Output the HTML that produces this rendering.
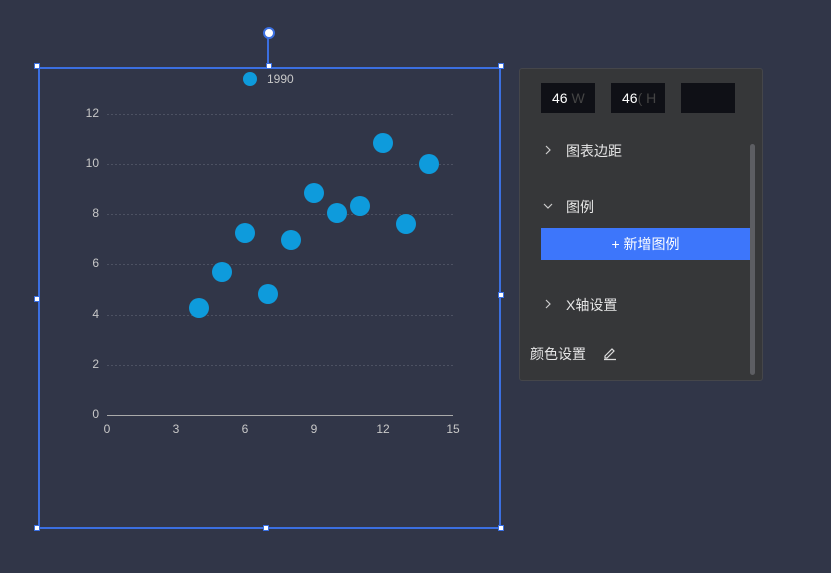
<!DOCTYPE html>
<html><head><meta charset="utf-8"><style>
body{margin:0;width:831px;height:573px;background:#313648;overflow:hidden;font-family:"Liberation Sans","Noto Sans CJK SC",sans-serif;position:relative}
.p{position:absolute}
.h{position:absolute;width:4px;height:4px;background:#fff;border:1px solid #3b6fe0}
.panel{position:absolute;left:519px;top:68px;width:242px;height:311px;background:#363739;border:1px solid #45464a;border-radius:3px}
.inp{position:absolute;top:14px;width:54px;height:30px;background:#0f1016;color:#fff;font-size:14px;line-height:30px}
.lbl{position:absolute;color:#e6e6e6;font-size:14px}
.chev{position:absolute}
</style></head><body>
<div class="p" style="left:38px;top:67px;width:463px;height:462px;border:2px solid #3b6fe0;box-sizing:border-box"></div>
<div class="p" style="left:267px;top:37px;width:2px;height:30px;background:#3b6fe0"></div>
<div class="p" style="left:263px;top:27px;width:8px;height:8px;border-radius:50%;background:#fff;border:2px solid #3b6fe0"></div>
<div class="h" style="left:34px;top:63px"></div><div class="h" style="left:266px;top:63px"></div><div class="h" style="left:498px;top:63px"></div>
<div class="h" style="left:34px;top:296px"></div><div class="h" style="left:498px;top:292px"></div>
<div class="h" style="left:34px;top:525px"></div><div class="h" style="left:263px;top:525px"></div><div class="h" style="left:498px;top:525px"></div>
<svg class="p" style="left:0;top:0" width="520" height="573">
<g stroke="#4c5162" stroke-dasharray="2,2" stroke-width="1">
<line x1="107" x2="453" y1="114.5" y2="114.5"/><line x1="107" x2="453" y1="164.5" y2="164.5"/><line x1="107" x2="453" y1="214.5" y2="214.5"/><line x1="107" x2="453" y1="264.5" y2="264.5"/><line x1="107" x2="453" y1="315.5" y2="315.5"/><line x1="107" x2="453" y1="365.5" y2="365.5"/></g>
<line x1="107" x2="453" y1="415.5" y2="415.5" stroke="#aaa"/>
<g fill="#c8c8c8" font-size="12" font-family="Liberation Sans" text-anchor="end">
<text x="99" y="117">12</text><text x="99" y="167">10</text><text x="99" y="217">8</text><text x="99" y="267">6</text><text x="99" y="318">4</text><text x="99" y="368">2</text><text x="99" y="418">0</text></g>
<g fill="#c8c8c8" font-size="12" font-family="Liberation Sans" text-anchor="middle">
<text x="107" y="433">0</text><text x="176" y="433">3</text><text x="245" y="433">6</text><text x="314" y="433">9</text><text x="383" y="433">12</text><text x="453" y="433">15</text></g>
<circle cx="250" cy="79" r="7" fill="#0e9bdc"/>
<text x="267" y="83" fill="#c8c8c8" font-size="12" font-family="Liberation Sans">1990</text>
<g fill="#0e9bdc">
<circle cx="199" cy="308" r="10"/><circle cx="222" cy="272" r="10"/><circle cx="245" cy="233" r="10"/><circle cx="268" cy="294" r="10"/><circle cx="291" cy="240" r="10"/><circle cx="314" cy="193" r="10"/><circle cx="337" cy="213" r="10"/><circle cx="360" cy="206" r="10"/><circle cx="383" cy="143" r="10"/><circle cx="406" cy="224" r="10"/><circle cx="429" cy="164" r="10"/></g>
</svg>
<div class="panel">
<div class="inp" style="left:21px;padding-left:11px;width:43px">46 <span style="color:#444">W</span></div>
<div class="inp" style="left:91px;padding-left:11px;width:43px">46<span style="color:#444">( H</span></div>
<div class="inp" style="left:161px"></div>
<svg class="chev" style="left:23px;top:75px" width="10" height="12"><path d="M3 2 L7 6 L3 10" stroke="#ccc" fill="none" stroke-width="1.2"/></svg>
<div class="lbl" style="left:46px;top:72px">图表边距</div>
<svg class="chev" style="left:22px;top:132px" width="12" height="10"><path d="M2 3 L6 7 L10 3" stroke="#ccc" fill="none" stroke-width="1.2"/></svg>
<div class="lbl" style="left:46px;top:128px">图例</div>
<div class="p" style="left:21px;top:159px;width:209px;height:32px;background:#3d76fb;color:#fff;font-size:14px;line-height:32px;text-align:center">+ 新增图例</div>
<svg class="chev" style="left:23px;top:229px" width="10" height="12"><path d="M3 2 L7 6 L3 10" stroke="#ccc" fill="none" stroke-width="1.2"/></svg>
<div class="lbl" style="left:46px;top:226px">X轴设置</div>
<div class="lbl" style="left:10px;top:275px">颜色设置</div>
<svg class="p" style="left:82px;top:276px" width="16" height="16"><path d="M3 11 L10 4 L12 6 L5 13 L3 13 Z M2 14.5 H14" stroke="#ddd" fill="none" stroke-width="1.2"/></svg>
<div class="p" style="left:230px;top:75px;width:5px;height:231px;background:#5d5e63;border-radius:3px"></div>
</div>
</body></html>
